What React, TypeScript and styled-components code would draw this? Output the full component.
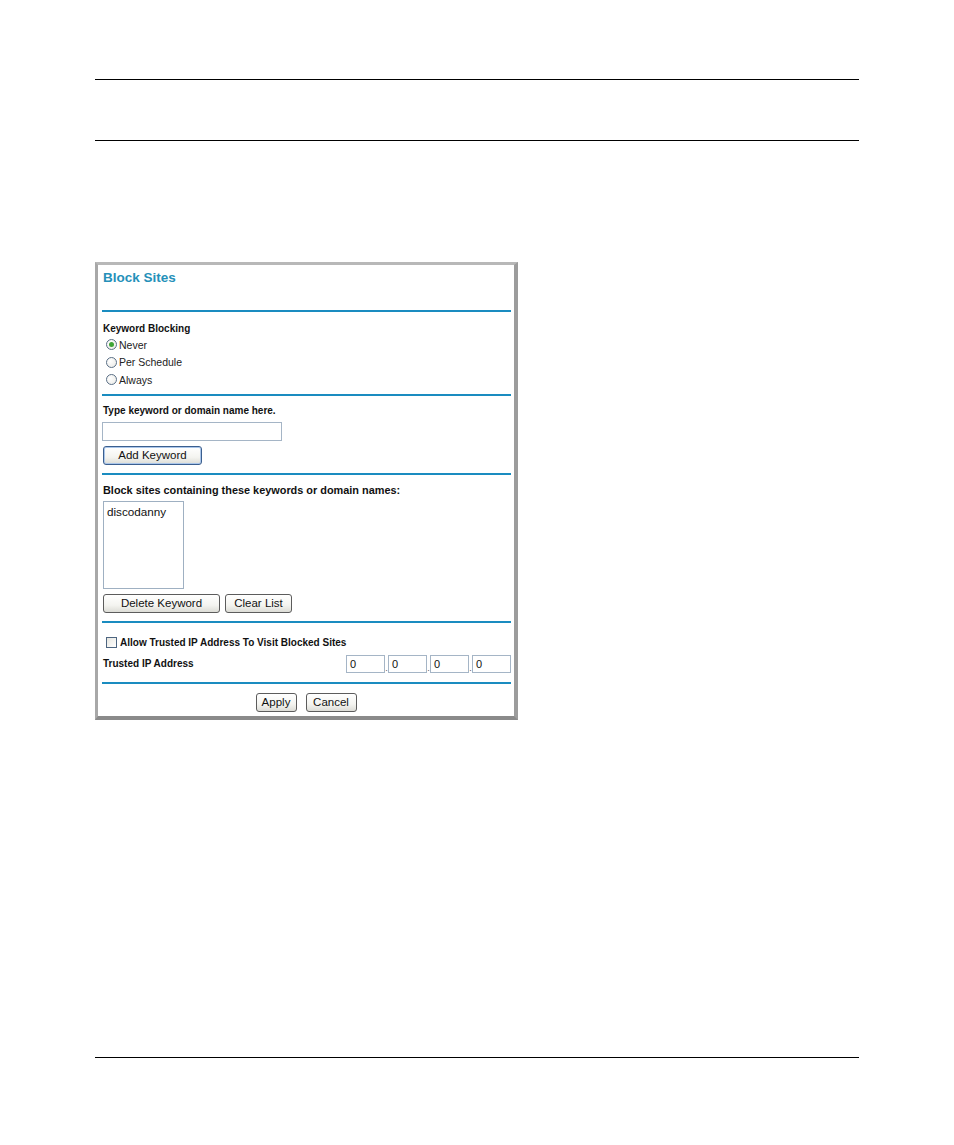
import React from 'react';
import styled, { createGlobalStyle } from 'styled-components';

const GlobalStyle = createGlobalStyle`
  html, body {
    margin: 0;
    padding: 0;
    background: #ffffff;
  }
  body {
    font-family: "Liberation Sans", Arial, sans-serif;
  }
`;

const Page = styled.div`
  width: 954px;
  height: 1145px;
  box-sizing: border-box;
  padding: 79px 95px 0 95px;
  display: flex;
  flex-direction: column;
`;

const HeaderRule = styled.div`
  height: 1px;
  width: 764px;
  background: #000000;
`;

const Gap = styled.div<{ $h: number }>`
  height: ${(p) => p.$h}px;
  flex-shrink: 0;
`;

const Frame = styled.div`
  width: 423px;
  height: 458px;
  box-sizing: border-box;
  border-style: solid;
  border-width: 3px 4px 4px 3px;
  border-top-color: #b8b8b8;
  border-left-color: #a8a8a8;
  border-right-color: #9c9c9c;
  border-bottom-color: #8a8a8a;
  background: #ffffff;
  padding: 0 3px 0 4px;
  display: flex;
  flex-direction: column;
`;

const Title = styled.div`
  height: 45px;
  box-sizing: border-box;
  padding: 5px 0 0 1px;
  font-size: 13.5px;
  line-height: 16px;
  font-weight: bold;
  color: #2590b9;
`;

const BlueRule = styled.div`
  height: 2px;
  background: #1a8cc0;
  flex-shrink: 0;
`;

const Section = styled.div<{ $top: number; $bottom: number }>`
  padding: ${(p) => p.$top}px 0 ${(p) => p.$bottom}px 1px;
  display: flex;
  flex-direction: column;
  align-items: flex-start;
`;

const Label = styled.div<{ $size?: number }>`
  font-size: ${(p) => p.$size ?? 10}px;
  line-height: 14px;
  font-weight: bold;
  color: #111111;
`;

const RadioRow = styled.label`
  display: flex;
  align-items: center;
  height: 17.5px;
  padding-left: 3px;
  font-size: 10.5px;
  color: #222222;
`;

const RadioCircle = styled.span<{ $checked?: boolean }>`
  width: 11px;
  height: 11px;
  box-sizing: border-box;
  border-radius: 50%;
  border: 1px solid #5a6f86;
  background: radial-gradient(circle at 35% 35%, #ffffff 0%, #e8e8e4 100%);
  margin-right: 2px;
  display: inline-flex;
  align-items: center;
  justify-content: center;

  &::after {
    content: '';
    display: ${(p) => (p.$checked ? 'block' : 'none')};
    width: 5px;
    height: 5px;
    border-radius: 50%;
    background: #3fa436;
  }
`;

const TextBox = styled.div<{ $w: number; $h: number }>`
  width: ${(p) => p.$w}px;
  height: ${(p) => p.$h}px;
  box-sizing: border-box;
  border: 1px solid #a5b5c6;
  background: #ffffff;
  font-size: 11px;
  line-height: ${(p) => p.$h - 2}px;
  padding-left: 3px;
  color: #111111;
`;

const ListBox = styled.div`
  width: 81px;
  height: 88px;
  box-sizing: border-box;
  border: 1px solid #9fb0c2;
  background: #ffffff;
  padding: 3px 0 0 3px;
  font-size: 11.7px;
  line-height: 14px;
  color: #111111;
`;

const ButtonRow = styled.div<{ $gap: number }>`
  display: flex;
  gap: ${(p) => p.$gap}px;
`;

const Button = styled.button<{ $w: number; $focused?: boolean }>`
  width: ${(p) => p.$w}px;
  height: 19px;
  box-sizing: border-box;
  padding: 0;
  border: 1px solid ${(p) => (p.$focused ? '#3b5f8f' : '#5c5c5c')};
  border-radius: 3px;
  background: linear-gradient(#ffffff 0%, #f4f4f0 60%, #dcdcd6 100%);
  box-shadow: ${(p) => (p.$focused ? 'inset 0 0 0 1px #aac6ea' : 'none')};
  font-family: "Liberation Sans", Arial, sans-serif;
  font-size: 11.5px;
  line-height: 17px;
  color: #111111;
`;

const CheckRow = styled.div`
  display: flex;
  align-items: center;
  height: 14px;
  padding-left: 3px;
`;

const CheckBox = styled.span`
  width: 11px;
  height: 11px;
  box-sizing: border-box;
  border: 1px solid #4d6580;
  background: linear-gradient(135deg, #e6e6e0, #ffffff);
  margin-right: 3px;
`;

const IpRow = styled.div`
  align-self: stretch;
  display: flex;
  align-items: center;
  justify-content: space-between;
  height: 18px;
`;

const IpFields = styled.div`
  display: flex;
  align-items: flex-end;
`;

const IpDot = styled.span`
  width: 3px;
  font-size: 9px;
  line-height: 10px;
  color: #555555;
  text-align: center;
`;

const Footer = styled.div`
  align-self: stretch;
  display: flex;
  justify-content: center;
  gap: 9px;
  padding-right: 2px;
`;

const ipValues = ['0', '0', '0', '0'];

export default function App() {
  return (
    <>
      <GlobalStyle />
      <Page>
        <HeaderRule />
        <Gap $h={60} />
        <HeaderRule />
        <Gap $h={121} />
        <Frame>
          <Title>Block Sites</Title>
          <BlueRule />
          <Section $top={10} $bottom={5}>
            <Label>Keyword Blocking</Label>
            <RadioRow>
              <RadioCircle $checked />
              Never
            </RadioRow>
            <RadioRow>
              <RadioCircle />
              Per Schedule
            </RadioRow>
            <RadioRow>
              <RadioCircle />
              Always
            </RadioRow>
          </Section>
          <BlueRule />
          <Section $top={8} $bottom={8}>
            <Label>Type keyword or domain name here.</Label>
            <Gap $h={4} />
            <TextBox $w={180} $h={19} style={{ marginLeft: -1 }} />
            <Gap $h={5} />
            <Button $w={99} $focused>
              Add Keyword
            </Button>
          </Section>
          <BlueRule />
          <Section $top={8} $bottom={8}>
            <Label $size={10.9}>Block sites containing these keywords or domain names:</Label>
            <Gap $h={4} />
            <ListBox>discodanny</ListBox>
            <Gap $h={5} />
            <ButtonRow $gap={5}>
              <Button $w={117}>Delete Keyword</Button>
              <Button $w={67}>Clear List</Button>
            </ButtonRow>
          </Section>
          <BlueRule />
          <Section $top={13} $bottom={9}>
            <CheckRow>
              <CheckBox />
              <Label>Allow Trusted IP Address To Visit Blocked Sites</Label>
            </CheckRow>
            <Gap $h={5} />
            <IpRow>
              <Label>Trusted IP Address</Label>
              <IpFields>
                {ipValues.map((v, i) => (
                  <React.Fragment key={i}>
                    {i > 0 && <IpDot>.</IpDot>}
                    <TextBox $w={39} $h={18}>
                      {v}
                    </TextBox>
                  </React.Fragment>
                ))}
              </IpFields>
            </IpRow>
          </Section>
          <BlueRule />
          <Section $top={9} $bottom={4}>
            <Footer>
              <Button $w={41}>Apply</Button>
              <Button $w={51}>Cancel</Button>
            </Footer>
          </Section>
        </Frame>
        <Gap $h={337} />
        <HeaderRule />
      </Page>
    </>
  );
}
